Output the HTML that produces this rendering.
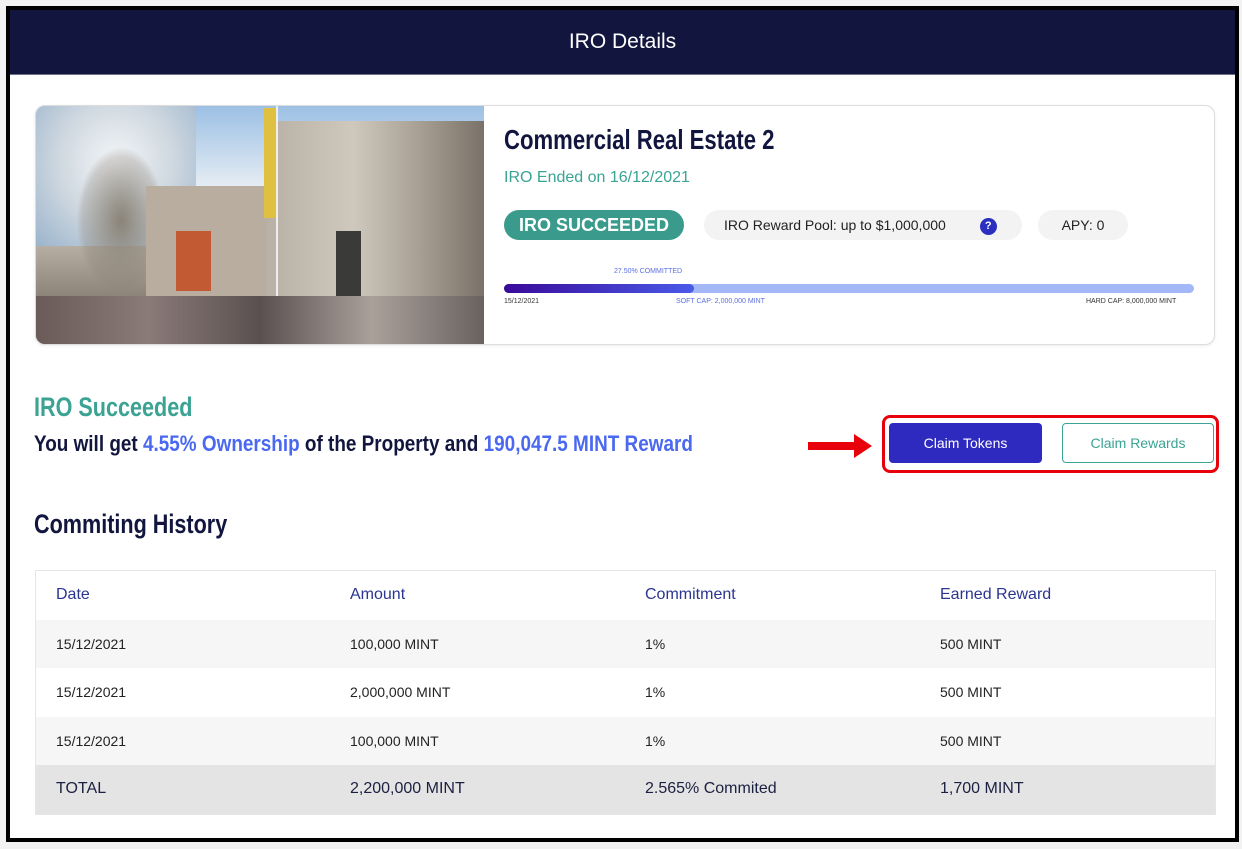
<!DOCTYPE html>
<html><head><meta charset="utf-8"><style>
*{margin:0;padding:0;box-sizing:border-box}
body{width:1242px;height:849px;background:#f2f2f2;font-family:"Liberation Sans",sans-serif;position:relative;overflow:hidden}
.frame{position:absolute;left:6px;top:6px;width:1233px;height:836px;border:4px solid #000;background:#fff}
.hdr{position:absolute;left:0;top:0;right:0;height:65px;background:#12163e;border-bottom:1px solid #6b6f8e;color:#fff;font-size:21px;text-align:center;line-height:64px}
.narrow{font-family:"Liberation Sans",sans-serif;font-weight:bold;transform-origin:0 0;white-space:nowrap}
.abs{position:absolute}
.card{left:25px;top:95px;width:1180px;height:240px;border:1px solid #ddd;border-radius:10px;overflow:hidden;background:#fff;box-shadow:0 1px 3px rgba(0,0,0,.08)}
.img{left:0;top:0;width:448px;height:238px;background:linear-gradient(180deg,#9cc0e4 0%,#e8eef4 35%,#c8c0b4 50%,#8c8478 80%,#6a625a 100%)}
.pill{position:absolute;top:104px;height:30px;border-radius:15px;background:#f3f3f3;font-size:14px;color:#222;line-height:30px;text-align:center}
table{border-collapse:collapse;width:1179px}
td{height:48.5px;font-size:14px;color:#222;padding-left:20px}
</style></head><body>
<div class="frame">
<div class="hdr">IRO Details</div>
<div class="abs card">
  <div class="abs img">
    <div class="abs" style="left:0;top:0;width:160px;height:140px;background:radial-gradient(ellipse at 50% 40%,#f4f6f8 0%,#cfd8e0 50%,#9bb4cc 100%)"></div>
    <div class="abs" style="left:40px;top:40px;width:90px;height:150px;background:radial-gradient(ellipse,#8a8478 0%,rgba(140,130,120,.3) 60%,transparent 70%)"></div>
    <div class="abs" style="left:110px;top:80px;width:120px;height:130px;background:#b9ada0"></div>
    <div class="abs" style="left:140px;top:125px;width:35px;height:60px;background:#c25a34"></div>
    <div class="abs" style="left:230px;top:15px;width:218px;height:200px;background:linear-gradient(90deg,#b8b0a4,#cfc8bc 40%,#a8a094 70%,#7a7268)"></div>
    <div class="abs" style="left:228px;top:2px;width:12px;height:110px;background:#e0c040"></div>
    <div class="abs" style="left:240px;top:0;width:2px;height:238px;background:#eee"></div>
    <div class="abs" style="left:300px;top:125px;width:25px;height:90px;background:#3a3a38"></div>
    <div class="abs" style="left:0;top:190px;width:448px;height:48px;background:linear-gradient(90deg,#6a5a58,#8a7a78,#5a5050,#aaa09a,#6a6260)"></div>
  </div>
  <div class="abs narrow" style="left:468px;top:18px;font-size:28px;color:#12163e;transform:scaleX(0.79)">Commercial Real Estate 2</div>
  <div class="abs" style="left:468px;top:63px;font-size:16px;color:#3aa393">IRO Ended on 16/12/2021</div>
  <div class="pill" style="left:668px;width:318px;text-align:left;padding-left:20px">IRO Reward Pool: up to $1,000,000 <span style="display:inline-block;width:17px;height:17px;border-radius:50%;background:#2a2fbf;color:#fff;font-size:11px;line-height:17px;text-align:center;font-weight:bold;margin-left:30px;vertical-align:1px">?</span></div>
  <div class="pill" style="left:1002px;width:90px">APY: 0</div>
  <div class="pill" style="left:468px;width:180px;background:#3a9a8c;color:#fff;font-size:18px;font-weight:bold">IRO SUCCEEDED</div>
  <div class="abs" style="left:578px;top:162px;font-size:7px;color:#5b6fe0">27.50% COMMITTED</div>
  <div class="abs" style="left:468px;top:178px;width:690px;height:9px;border-radius:5px;background:#a4b8f8"></div>
  <div class="abs" style="left:468px;top:178px;width:190px;height:9px;border-radius:5px;background:linear-gradient(90deg,#3a0a9a,#4a5ae8)"></div>
  <div class="abs" style="left:468px;top:192px;font-size:7px;color:#333">15/12/2021</div>
  <div class="abs" style="left:640px;top:192px;font-size:7px;color:#5b6fe0">SOFT CAP: 2,000,000 MINT</div>
  <div class="abs" style="left:1050px;top:192px;font-size:7px;color:#333">HARD CAP: 8,000,000 MINT</div>
</div>
<div class="abs narrow" style="left:24px;top:382px;font-size:27px;color:#3aa393;transform:scaleX(0.8)">IRO Succeeded</div>
<div class="abs narrow" style="left:24px;top:421px;font-size:22px;color:#12163e;transform:scaleX(0.86)">You will get <span style="color:#4a68f0">4.55% Ownership</span> of the Property and <span style="color:#4a68f0">190,047.5 MINT Reward</span></div>
<svg class="abs" style="left:798px;top:424px" width="66" height="24"><path d="M0 8h46V0l18 12-18 12v-8H0z" fill="#e8000a"/></svg>
<div class="abs" style="left:872px;top:405px;width:337px;height:58px;border:3px solid #e8000a;border-radius:8px"></div>
<div class="abs" style="left:879px;top:413px;width:153px;height:40px;background:#2e2abf;border-radius:4px;color:#fff;font-size:14px;text-align:center;line-height:40px">Claim Tokens</div>
<div class="abs" style="left:1052px;top:413px;width:152px;height:40px;border:1px solid #3aa393;border-radius:4px;color:#3aa393;font-size:14px;text-align:center;line-height:38px">Claim Rewards</div>
<div class="abs narrow" style="left:24px;top:499px;font-size:27px;color:#12163e;transform:scaleX(0.8)">Commiting History</div>
<div class="abs" style="left:25px;top:560px;border:1px solid #e6e6e6">
<table>
<tr style="background:#fff"><td style="color:#2a3590;font-size:16px;width:294px">Date</td><td style="color:#2a3590;font-size:16px;width:295px">Amount</td><td style="color:#2a3590;font-size:16px;width:295px">Commitment</td><td style="color:#2a3590;font-size:16px">Earned Reward</td></tr>
<tr style="background:#f6f6f6"><td>15/12/2021</td><td>100,000 MINT</td><td>1%</td><td>500 MINT</td></tr>
<tr style="background:#fff"><td>15/12/2021</td><td>2,000,000 MINT</td><td>1%</td><td>500 MINT</td></tr>
<tr style="background:#f6f6f6"><td>15/12/2021</td><td>100,000 MINT</td><td>1%</td><td>500 MINT</td></tr>
<tr style="background:#e4e4e4"><td style="font-size:16px;color:#1c2040">TOTAL</td><td style="font-size:16px;color:#1c2040">2,200,000 MINT</td><td style="font-size:16px;color:#1c2040">2.565% Commited</td><td style="font-size:16px;color:#1c2040">1,700 MINT</td></tr>
</table></div>
</div>
</body></html>
